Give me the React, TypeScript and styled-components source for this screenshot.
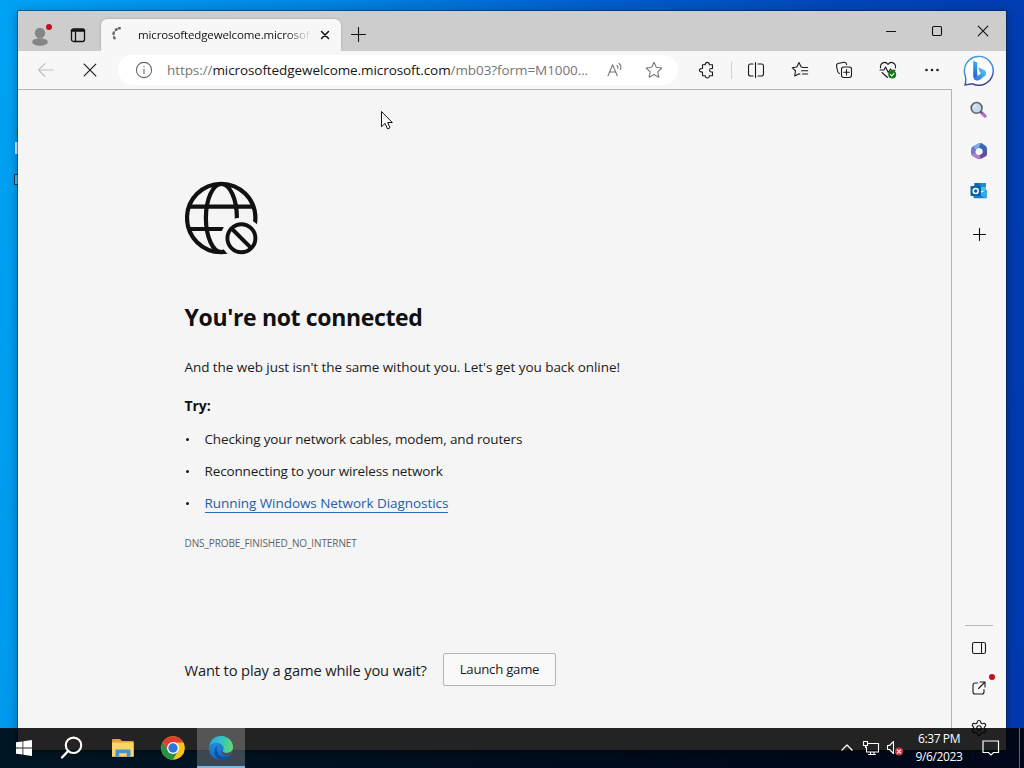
import type { ReactNode } from 'react'
import styled, { createGlobalStyle } from 'styled-components'
import { Settings } from 'lucide-react'

const GlobalStyle = createGlobalStyle`
  * {
    box-sizing: border-box;
  }
  body {
    margin: 0;
    overflow: hidden;
    font-family: 'Open Sans', 'Noto Sans', sans-serif;
  }
  svg {
    display: block;
    flex: none;
  }
`

const Desktop = styled.div`
  position: relative;
  display: flex;
  flex-direction: column;
  justify-content: flex-end;
  width: 1024px;
  height: 768px;
  overflow: hidden;
  background: linear-gradient(97deg, #00a2f4 0%, #0085e2 28%, #0060cc 52%, #0047b9 74%, #0038ae 100%);
`
const Shortcuts = styled.svg`
  position: absolute;
  left: 12px;
  top: 120px;
`
const Window = styled.div`
  position: absolute;
  left: 18px;
  top: 11px;
  display: flex;
  flex-direction: column;
  width: 988px;
  height: 739px;
  background: #f7f7f7;
  box-shadow: 0 0 0 1px rgba(0, 30, 60, 0.45), 0 2px 10px rgba(0, 0, 0, 0.35);
`
const TitleBar = styled.div`
  display: flex;
  flex: none;
  height: 40px;
  padding-left: 7px;
  background: #cdcdcd;
`
const TitleButton = styled.button<{ $width: number; $drop?: number }>`
  display: flex;
  align-items: center;
  justify-content: center;
  width: ${(props) => props.$width}px;
  height: 40px;
  padding: ${(props) => props.$drop || 0}px 0 0;
  border: none;
  background: none;
`
const Tab = styled.div`
  display: flex;
  align-items: center;
  width: 240px;
  height: 32px;
  margin-top: 8px;
  padding: 0 8px 0 9px;
  border-radius: 6px 6px 0 0;
  background: #f7f7f7;
  box-shadow: 0 0 2px rgba(0, 0, 0, 0.3);
  clip-path: inset(-3px -3px 0 -3px);
`
const TabTitle = styled.span`
  flex: 1;
  margin: 0 7px 0 12px;
  white-space: nowrap;
  font-size: 11.5px;
  line-height: 20px;
  letter-spacing: -0.12px;
  color: #111;
  mask-image: linear-gradient(90deg, #000 86%, rgba(0, 0, 0, 0.15) 98%);
`
const Controls = styled.div`
  display: flex;
  margin-left: auto;
`
const Body = styled.div`
  display: flex;
  flex: 1;
  min-height: 0;
`
const Main = styled.div`
  display: flex;
  flex-direction: column;
  width: 934px;
`
const Toolbar = styled.div`
  display: flex;
  align-items: center;
  flex: none;
  height: 38px;
  padding-left: 6px;
`
const ToolButton = styled.button`
  display: flex;
  flex: none;
  align-items: center;
  justify-content: center;
  width: 44px;
  height: 38px;
  padding: 0;
  border: none;
  background: none;
`
const AddressBar = styled.div`
  display: flex;
  flex: none;
  align-items: center;
  width: 560px;
  height: 30px;
  margin: 0 7px 0 6px;
  padding: 0 15px 0 17px;
  border-radius: 15px;
  background: #fff;
`
const Url = styled.span`
  flex: none;
  width: 439px;
  margin-left: 14px;
  white-space: nowrap;
  font-size: 13.5px;
  line-height: 20px;
  letter-spacing: -0.08px;
  color: #767676;
  b {
    font-weight: 400;
    color: #151515;
  }
`
const AddressActions = styled.div`
  display: flex;
  gap: 21px;
`
const ToolDivider = styled.div`
  flex: none;
  width: 1px;
  height: 17px;
  margin: 0 2px;
  background: #d0d0d0;
`
const Page = styled.main`
  flex: 1;
  padding: 91px 0 0 166.5px;
  border-top: 1px solid #b3b3b3;
  border-right: 1px solid #b3b3b3;
  background: #f5f5f5;
  color: #1b1b1b;
`
const Heading = styled.h1`
  margin: 46px 0 0;
  font-size: 23px;
  line-height: 32px;
  font-weight: 700;
  letter-spacing: -0.35px;
  color: #101010;
`
const Text = styled.p`
  margin: 24px 0 0;
  font-size: 13.5px;
  line-height: 20px;
  letter-spacing: -0.06px;
`
const Try = styled.h2`
  margin: 19px 0 0;
  font-size: 14px;
  line-height: 20px;
  font-weight: 700;
  letter-spacing: -0.05px;
  color: #101010;
`
const Tips = styled.ul`
  display: flex;
  flex-direction: column;
  gap: 12px;
  margin: 13px 0 0;
  padding: 0;
  list-style: none;
`
const Tip = styled.li`
  display: flex;
  align-items: center;
  height: 20px;
  font-size: 13.5px;
  line-height: 20px;
  letter-spacing: -0.14px;
  &::before {
    content: '';
    width: 3px;
    height: 3px;
    margin: 1px 16px 0 1px;
    border-radius: 50%;
    background: #1b1b1b;
  }
`
const TipLink = styled.a`
  height: 20px;
  border-bottom: 1px solid #2b6cb0;
  line-height: 20px;
  letter-spacing: -0.06px;
  color: #2460a7;
`
const ErrorCode = styled.div`
  margin-top: 23px;
  font-size: 10px;
  line-height: 14px;
  letter-spacing: -0.1px;
  color: #626262;
`
const GameRow = styled.div`
  display: flex;
  align-items: center;
  gap: 16px;
  margin-top: 103px;
`
const GameText = styled.span`
  width: 242.5px;
  padding-top: 1px;
  white-space: nowrap;
  font-size: 14.7px;
  line-height: 20px;
  letter-spacing: -0.14px;
`
const GameButton = styled.button`
  width: 113px;
  height: 33px;
  padding: 0 0 1px;
  border: 1px solid #b5b5b5;
  border-radius: 2px;
  background: #f9f9f9;
  font: 13.2px/20px 'Open Sans', sans-serif;
  letter-spacing: -0.25px;
  color: #1b1b1b;
`
const Sidebar = styled.aside`
  display: flex;
  flex-direction: column;
  align-items: center;
  width: 54px;
  padding-bottom: 2px;
`
const SideButton = styled.button<{ $height?: number; $drop?: number }>`
  position: relative;
  display: flex;
  flex: none;
  align-items: center;
  justify-content: center;
  width: 54px;
  height: ${(props) => props.$height || 40}px;
  padding: ${(props) => props.$drop || 0}px 0 0;
  border: none;
  background: none;
`
const SideDivider = styled.div`
  flex: none;
  width: 28px;
  height: 1px;
  margin: auto 0 2px;
  background: #b8b8b8;
`
const Dot = styled.span`
  position: absolute;
  right: 11px;
  top: 6px;
  width: 6px;
  height: 6px;
  border-radius: 50%;
  background: #c50f1f;
`
const ProfileDot = styled(Dot)`
  right: auto;
  left: 28px;
  top: 13px;
`
const Cursor = styled.svg`
  position: absolute;
  left: 380px;
  top: 110px;
`
const Taskbar = styled.div`
  position: relative;
  display: flex;
  height: 40px;
  background: rgba(0, 0, 0, 0.86);
`
const TaskButton = styled.div<{ $width?: number; $active?: boolean }>`
  display: flex;
  align-items: center;
  justify-content: center;
  width: ${(props) => props.$width || 48}px;
  height: 40px;
  background: ${(props) => props.$active && 'rgba(255, 255, 255, 0.23)'};
  box-shadow: ${(props) => props.$active && 'inset 0 -2px #76b9ed'};
`
const Tray = styled.div`
  display: flex;
  margin-left: auto;
`
const Clock = styled.div`
  width: 66px;
  padding-top: 2px;
  text-align: center;
  font-size: 12px;
  line-height: 18px;
  letter-spacing: -0.4px;
  color: #fff;
`
const ShowDesktop = styled.div`
  width: 5px;
  margin-left: 9px;
  border-left: 1px solid #5b6570;
`

interface IconProps {
  w?: number
  h?: number
  color?: string
  stroke?: number
  children: ReactNode
}

function Icon({ w = 20, h = w, color = '#1b1b1b', stroke = 1.1, children }: IconProps) {
  return (
    <svg
      width={w}
      height={h}
      viewBox={`0 0 ${w} ${h}`}
      fill='none'
      stroke={color}
      strokeWidth={stroke}
      strokeLinecap='round'
      strokeLinejoin='round'
    >
      {children}
    </svg>
  )
}

function PlusIcon({ size = 14 }: { size?: number }) {
  const mid = size / 2
  return (
    <Icon w={size} color='#111'>
      <path d={`M${mid} .5V${size - 0.5}M.5 ${mid}H${size - 0.5}`} />
    </Icon>
  )
}

function GlobeIcon() {
  return (
    <Icon w={74} color='#111' stroke={4.2}>
      <g strokeLinecap='butt'>
        <circle cx='36.2' cy='37' r='34.2' />
        <ellipse cx='36.4' cy='37' rx='15.5' ry='34' />
        <path d='M4 25.7h65M4 48h45' />
        <circle cx='56.4' cy='57.3' r='20.8' fill='#f5f5f5' stroke='none' />
        <circle cx='56.4' cy='57.3' r='14' strokeWidth='3.9' />
        <path d='M46.6 47.5l19.6 19.6' strokeWidth='3.9' />
      </g>
    </Icon>
  )
}

function BingIcon() {
  return (
    <svg width='32' height='32' viewBox='0 0 32 32'>
      <defs>
        <linearGradient id='bubble' x1='0' y1='0' x2='.3' y2='1'>
          <stop offset='0' stopColor='#3aa0e8' />
          <stop offset='.6' stopColor='#3f86dc' />
          <stop offset='1' stopColor='#3b3f90' />
        </linearGradient>
        <linearGradient id='stem' x1='0' y1='0' x2='0' y2='1'>
          <stop offset='0' stopColor='#35b2f2' />
          <stop offset='1' stopColor='#2456d6' />
        </linearGradient>
        <linearGradient id='bowl' x1='1' y1='0' x2='0' y2='1'>
          <stop offset='0' stopColor='#55d4ee' />
          <stop offset='1' stopColor='#2d6be0' />
        </linearGradient>
      </defs>
      <path
        d='M2 30.2Q3.6 25 2 20A14.4 14.4 0 1 1 10 29Q6 28.8 2 30.2z'
        fill='#fbfdff'
        stroke='url(#bubble)'
        strokeWidth='1.4'
        strokeLinejoin='round'
      />
      <path d='M10.2 5.8l4 1.6v14.2l-1.2 2.4-2.8-1.8z' fill='url(#stem)' />
      <path d='M15.3 12.2l6 2.8c2 1 2.4 3.6 1.1 5.4l-5.4 4.4c-2.2 1.5-5.2.8-6.6-1.6l7.6-4.8-1.5-2z' fill='url(#bowl)' />
    </svg>
  )
}

function SearchEmoji() {
  return (
    <svg width='18' height='18' viewBox='0 0 18 18'>
      <path d='M11.8 11.8l3.3 3.3' stroke='#b965dc' strokeWidth='3.2' strokeLinecap='round' />
      <path d='M10.3 10.3l2 2' stroke='#555' strokeWidth='1.8' />
      <circle cx='6.6' cy='6.9' r='5.4' fill='#c3dcea' stroke='#626066' strokeWidth='1.6' />
      <path d='M3.8 6.5a3.2 3.2 0 0 1 2.7-2.7' stroke='#fff' fill='none' />
    </svg>
  )
}

function OfficeIcon() {
  return (
    <svg width='18' height='18' viewBox='0 0 18 18'>
      <path d='M9.5 1L3 4.3Q1 5.5 1 8v3.5q.5 2.5 4.5 1.5V9Q6 6.3 9 6L13 2Q11 .5 9.5 1z' fill='#6f78cf' />
      <path d='M9.5 1L4 3.8 6 8.5q.5-2.3 3.5-3L13 2Q11 .5 9.5 1z' fill='#78b4e4' />
      <path d='M11 1l4.5 2.7Q17 4.8 17 7v5l-4.5-1V9Q12 6.2 8.5 6z' fill='#3d62b8' />
      <path d='M1.2 12.3L5.500 11q1.300 2.300 4 2l7.300-3.200v2.500q0 1.200-1.100 1.900L10.500 17q-1.500.7-3 0l-4.800-2.700Q1.300 13.500 1.200 12.300z' fill='#ad7fcb' />
      <path d='M12.700 10.500q-1 2.300-3.200 2.600l1.300 3.700 4.900-2.600Q17 13.500 17 12V8z' fill='#635196' />
      <path d='M9 6l3.300 1.700v3.400L9.300 13 6 11.200V7.700z' fill='#f7f7f7' />
    </svg>
  )
}

function OutlookIcon() {
  return (
    <svg width='18' height='17' viewBox='0 0 18 17'>
      <path d='M4.500 1H16v8H4.500z' fill='#1b8fd2' />
      <path d='M4.500 1h5.700v4H4.500z' fill='#0a6cae' />
      <path d='M10.200 5H16v4h-5.800z' fill='#46c1ea' />
      <path d='M3.500 9l6.500 2.500L17 8v7.500q0 .8-.8.8H4.300q-.8 0-.8-.8z' fill='#1482c4' />
      <path d='M17 8v7.500q0 .8-.8.8L8 12.500z' fill='#35abe0' />
      <rect x='.5' y='4' width='10.5' height='10' rx='.8' fill='#0763a4' />
      <circle cx='5.7' cy='9' r='2.5' fill='none' stroke='#fff' strokeWidth='1.5' />
    </svg>
  )
}

function ChromeIcon() {
  return (
    <svg width='24' height='24' viewBox='0 0 24 24'>
      <circle cx='12' cy='12' r='11.8' fill='#fcc31e' />
      <path d='M1.800 6.100A11.800 11.800 0 0 0 12 23.800l5-8.900H7z' fill='#229342' />
      <path d='M1.800 6.100A11.800 11.800 0 0 1 22.200 6.100l.3.5H12l-5 8.400z' fill='#e33b2e' />
      <circle cx='12' cy='12' r='6' fill='#fff' />
      <circle cx='12' cy='12' r='4.7' fill='#2f74dc' />
    </svg>
  )
}

function EdgeIcon() {
  return (
    <svg width='26' height='26' viewBox='0 0 26 26'>
      <defs>
        <linearGradient id='edgeTop' x1='0' y1='.4' x2='1' y2='.5'>
          <stop offset='0' stopColor='#2aa7df' />
          <stop offset='.5' stopColor='#35c1c7' />
          <stop offset='1' stopColor='#66d867' />
        </linearGradient>
        <linearGradient id='edgeLeft' x1='0' y1='0' x2='.2' y2='1'>
          <stop offset='0' stopColor='#249bdd' />
          <stop offset='1' stopColor='#1269c9' />
        </linearGradient>
      </defs>
      <circle cx='13' cy='13' r='12' fill='url(#edgeLeft)' />
      <path
        d='M1.300 11C2.300 5 7 1 13 1c7 0 12 5 12 11 0 4-3 6-6.500 6-3 0-4.300-1-3.500-2.500.9-1.600 1-3.200-.2-4.700C11.500 6.500 4.500 7 1.300 11z'
        fill='url(#edgeTop)'
      />
      <path d='M9.500 10.500C7.500 14 9 20 14 21.500c3.500 1 7-.2 9.300-2C21.500 23 17 25.200 13 25 6 24 4.500 15 9.500 10.500z' fill='#0f4f9f' />
      <path d='M15 15.500c-.8 1.500.5 2.500 3.500 2.500 2 0 3.800-.5 5-1.700l1.600 1.200c-.5 1-1 1.700-1.800 2.300-4 2.300-9.800.7-10.300-3.800z' fill='#4a5055' />
    </svg>
  )
}

function TabStrip() {
  return (
    <TitleBar>
      <TitleButton $width={30} $drop={7}>
        <svg width='20' height='24' viewBox='0 0 20 24'>
          <circle cx='10' cy='10' r='5.2' fill='#858585' />
          <path d='M2.300 19c0-5 15.400-5 15.400 0 0 5-15.400 5-15.400 0z' fill='#858585' />
        </svg>
      </TitleButton>
      <TitleButton $width={46} $drop={7}>
        <Icon w={16} color='#111' stroke={1.3}>
          <rect x='1.5' y='2' width='13' height='12.5' rx='2' />
          <path d='M2 3.500h12' strokeWidth='2.4' />
          <path d='M5.500 5v9.500' />
        </Icon>
      </TitleButton>
      <Tab>
        <Icon w={16} color='#666' stroke={2.4}>
          <path d='M4.600 11.300l-.6-1M3.500 7l.3-1.500M5.800 3l.9-.7M9 1.300h.8' />
        </Icon>
        <TabTitle>microsoftedgewelcome.microsof</TabTitle>
        <Icon w={16} color='#111' stroke={1.5}>
          <path d='M4.500 4.500l7 7M11.500 4.500l-7 7' />
        </Icon>
      </Tab>
      <TitleButton $width={34} $drop={7}>
        <PlusIcon size={15} />
      </TitleButton>
      <Controls>
        <TitleButton $width={46}>
          <Icon w={12} color='#111'>
            <path d='M1.500 6.500h9' />
          </Icon>
        </TitleButton>
        <TitleButton $width={46}>
          <Icon w={12} color='#111'>
            <rect x='1.5' y='1.5' width='9' height='9' rx='1.2' />
          </Icon>
        </TitleButton>
        <TitleButton $width={46}>
          <Icon w={12} color='#111'>
            <path d='M1.200 1.200l9.600 9.600M10.800 1.200L1.200 10.800' />
          </Icon>
        </TitleButton>
      </Controls>
    </TitleBar>
  )
}

function NavBar() {
  return (
    <Toolbar>
      <ToolButton>
        <Icon w={18} color='#c2c2c2'>
          <path d='M1.500 9h15M8 2.500L1.500 9 8 15.500' />
        </Icon>
      </ToolButton>
      <ToolButton>
        <Icon w={16} stroke={1.2}>
          <path d='M2.200 2.200l11.600 11.600M13.800 2.200L2.200 13.800' />
        </Icon>
      </ToolButton>
      <AddressBar>
        <Icon w={18} color='#686868'>
          <circle cx='9' cy='9' r='7.6' />
          <path d='M9 8v4.800M9 5.300v.4' />
        </Icon>
        <Url>
          https://<b>microsoftedgewelcome.microsoft.com</b>/mb03?form=M1000...
        </Url>
        <AddressActions>
          <Icon w={18} color='#777'>
            <path d='M2 14.800L6.600 3.700l4.600 11.100M3.500 11h6.200M11 4.500q1.300 1.200.8 3M13 2.500q2.800 2.300 1.400 6' />
          </Icon>
          <Icon w={18} color='#777'>
            <path d='M9 1.300l2.300 5 5.500.7-4 3.800 1 5.400L9 13.500l-4.800 2.700 1-5.400-4-3.800 5.500-.7z' />
          </Icon>
        </AddressActions>
      </AddressBar>
      <ToolButton>
        <Icon w={18}>
          <path d='M4.500 3.800h2.800c-.4-3.200 4.400-3.200 4 0h3.200v3.700h-1c-2.600 0-2.600 3.500 0 3.500h1v3.700h-3.200c.4 3-4.400 3-4 0H4.500V11c-4.200.3-4.200-3.800 0-3.500z' />
        </Icon>
      </ToolButton>
      <ToolDivider />
      <ToolButton>
        <Icon w={18}>
          <path d='M6 3H3.500q-2 0-2 2v8q0 2 2 2H6M11 3h3.500q2 0 2 2v8q0 2-2 2H11M8.500 1.500v15' />
        </Icon>
      </ToolButton>
      <ToolButton>
        <Icon w={18}>
          <path d='M11.600 6.200L10.200 6 8 1.500 5.800 6l-4.600.7L4.500 10l-.8 5 4.300-2.300.9.5M12 6.500h4.600M10.500 9.700h6.200M11.500 13h5.200' />
        </Icon>
      </ToolButton>
      <ToolButton>
        <Icon w={18}>
          <rect x='6.5' y='6' width='10' height='10.5' rx='2.2' />
          <path d='M11.500 8.500v5.500M8.700 11.300h5.600M4.500 12.500Q3 12 2.700 10.500L1.500 5q-.3-2 1.500-2.500l6-1.200q2-.2 2.500 1.700l.2.700' />
        </Icon>
      </ToolButton>
      <ToolButton>
        <Icon w={18}>
          <path d='M1.600 7C.5 2 6.200-.5 9 3.500c2.800-4 8.500-1.500 7.400 3.500M1 9h4l1.600-3 2.600 5.500L11.500 8l.8 1.200H16M3 11.500l5.500 5' />
          <circle cx='13.2' cy='13.5' r='4' fill='#177a17' stroke='none' />
          <path d='M11.500 13.600l1.200 1.200 2.200-2.200' stroke='#fff' />
        </Icon>
      </ToolButton>
      <ToolButton>
        <Icon w={16}>
          <g fill='#1b1b1b' stroke='none'>
            <circle cx='2.5' cy='8' r='1.3' />
            <circle cx='8' cy='8' r='1.3' />
            <circle cx='13.5' cy='8' r='1.3' />
          </g>
        </Icon>
      </ToolButton>
    </Toolbar>
  )
}

function OfflinePage() {
  return (
    <Page>
      <GlobeIcon />
      <Heading>You're not connected</Heading>
      <Text>And the web just isn't the same without you. Let's get you back online!</Text>
      <Try>Try:</Try>
      <Tips>
        <Tip>Checking your network cables, modem, and routers</Tip>
        <Tip>Reconnecting to your wireless network</Tip>
        <Tip>
          <TipLink>Running Windows Network Diagnostics</TipLink>
        </Tip>
      </Tips>
      <ErrorCode>DNS_PROBE_FINISHED_NO_INTERNET</ErrorCode>
      <GameRow>
        <GameText>Want to play a game while you wait?</GameText>
        <GameButton>Launch game</GameButton>
      </GameRow>
    </Page>
  )
}

function SideRail() {
  return (
    <Sidebar>
      <SideButton $height={39}>
        <BingIcon />
      </SideButton>
      <SideButton>
        <SearchEmoji />
      </SideButton>
      <SideButton $drop={2}>
        <OfficeIcon />
      </SideButton>
      <SideButton $drop={1}>
        <OutlookIcon />
      </SideButton>
      <SideButton $height={48}>
        <PlusIcon size={13} />
      </SideButton>
      <SideDivider />
      <SideButton>
        <Icon w={16}>
          <rect x='1.5' y='2.5' width='13' height='11' rx='1.8' />
          <path d='M10.500 2.500v11' />
        </Icon>
      </SideButton>
      <SideButton>
        <Icon w={16}>
          <path d='M6.500 3H4Q2 3 2 5v7q0 2 2 2h7q2 0 2-2V9.500M9 2h5v5M14 2L7.500 8.500' />
        </Icon>
        <Dot />
      </SideButton>
      <SideButton>
        <Settings size={18} strokeWidth={1.5} color='#1b1b1b' />
      </SideButton>
    </Sidebar>
  )
}

function BottomBar() {
  return (
    <Taskbar>
      <TaskButton>
        <svg width='16' height='16' viewBox='0 0 16 16' fill='#fff'>
          <path d='M0 2.300L6.500 1.400v6.200H0zM7.300 1.300L16 0v7.600H7.300zM0 8.400h6.500v6.200L0 13.700zM7.300 8.400H16V16l-8.700-1.300z' />
        </svg>
      </TaskButton>
      <TaskButton>
        <Icon w={24} color='#fff' stroke={2.1}>
          <circle cx='13.5' cy='9.3' r='7.7' />
          <path d='M8.200 15L2 21.500' strokeWidth='2.4' />
        </Icon>
      </TaskButton>
      <TaskButton $width={53}>
        <svg width='22' height='20' viewBox='0 0 22 20'>
          <path d='M0 2q0-1 1-1h7l2 2h11.500v15.500H0z' fill='#e3a725' />
          <path d='M0 4.500h21.700V18.700H0z' fill='#fbd667' />
          <path d='M3.500 18.700v-6q0-1.200 1.200-1.200h12.600q1.200 0 1.200 1.200v6h-3.700v-3.500H7.200v3.500z' fill='#4195ce' />
        </svg>
      </TaskButton>
      <TaskButton>
        <ChromeIcon />
      </TaskButton>
      <TaskButton $active>
        <EdgeIcon />
      </TaskButton>
      <Tray>
        <TaskButton $width={24}>
          <Icon w={14} color='#fff' stroke={1.3}>
            <path d='M1.500 9.500L7 4l5.500 5.500' strokeLinecap='butt' />
          </Icon>
        </TaskButton>
        <TaskButton $width={24}>
          <Icon w={18} color='#fff'>
            <path d='M6 4.500h10.500v8.500H4.500V8M8.500 13v2.500M12 13v2.500M6.500 15.500h7M1.500 2.500h4v4h-4zM3.500 6.500v2' strokeLinejoin='miter' />
          </Icon>
        </TaskButton>
        <TaskButton $width={23}>
          <Icon w={18} color='#fff'>
            <path d='M1.500 6.500h2l4-4v12l-4-4h-2z' />
            <circle cx='13' cy='12.5' r='4' fill='#d13440' stroke='none' />
            <path d='M11.300 10.800l3.400 3.400M14.700 10.800l-3.400 3.400' />
          </Icon>
        </TaskButton>
        <Clock>
          6:37 PM
          <br />
          9/6/2023
        </Clock>
        <TaskButton $width={38}>
          <Icon w={20} h={18} color='#fff' stroke={1.2}>
            <path d='M2 2h15.500v11.500h-5L10 16l-2.500-2.500H2z' strokeLinejoin='miter' />
          </Icon>
        </TaskButton>
        <ShowDesktop />
      </Tray>
    </Taskbar>
  )
}

function App() {
  return (
    <>
      <GlobalStyle />
      <Desktop>
        <Shortcuts width='8' height='70' viewBox='0 0 8 70'>
          <path d='M3 13l4-5v8z' fill='#2f9a5c' />
          <path d='M3 22h5v12H3z' fill='#d5e9f3' />
          <path d='M8 54.500H2.500v10H8' fill='#5cb8e8' stroke='#123a52' />
        </Shortcuts>
        <Window>
          <TabStrip />
          <Body>
            <Main>
              <NavBar />
              <OfflinePage />
            </Main>
            <SideRail />
          </Body>
          <ProfileDot />
        </Window>
        <Cursor width='14' height='21' viewBox='0 0 14 21'>
          <path
            d='M1.500 1.500v15.200l3.600-3.300 2.400 5.500 2.500-1.100-2.300-5.300h4.600z'
            fill='#fff'
            stroke='#111'
          />
        </Cursor>
        <BottomBar />
      </Desktop>
    </>
  )
}

export default App
